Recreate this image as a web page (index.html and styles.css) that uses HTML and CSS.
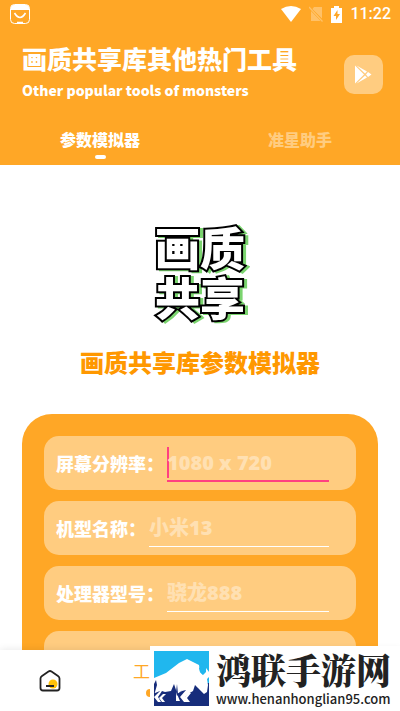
FILE: index.html
```html
<!DOCTYPE html>
<html lang="zh-CN">
<head>
    <meta charset="UTF-8">
    <meta name="viewport" content="width=device-width, initial-scale=1.0">
    <title>画质共享库</title>
    <link rel="stylesheet" href="styles.css">
</head>
<body>
    <header class="top">
        <div class="status-bar">
            <svg class="app-icon" width="20" height="20" viewBox="0 0 20 20">
                <rect x="0.5" y="0.5" width="19" height="19" rx="4" fill="none" stroke="#fff"/>
                <path d="M1 6V4a3 3 0 0 1 3-3h12a3 3 0 0 1 3 3v2z" fill="#fff"/>
                <path d="M4.500 9q5.500 9 11 0M7 18.500h6" fill="none" stroke="#fff" stroke-width="1.600"/>
            </svg>
            <div class="status-icons">
                <svg width="20" height="16" viewBox="0 0 20 16"><path d="M0 3Q10-3 20 3L10 16z" fill="#fff"/></svg>
                <svg class="no-sim" width="14" height="16" viewBox="0 0 14 16"><path d="M5 1h8v11.500L3.500 3zM2 5l9.500 10H2z" fill="#fff"/><path d="M0 1l13.500 14.500" stroke="#fff" stroke-width="1.200"/></svg>
                <svg width="11" height="17" viewBox="0 0 11 17"><path d="M0 2h3V0h5v2h3v15H0z" fill="#fff"/><path d="M6.500 4L2.500 10h2.500v4L9 8H6.500z" fill="#ffa726"/></svg>
                <time>11:22</time>
            </div>
        </div>
        <div class="heading">
            <div>
                <h1>画质共享库其他热门工具</h1>
                <p>Other popular tools of monsters</p>
            </div>
            <button class="play-button" type="button" aria-label="Play">
                <svg width="17" height="19" viewBox="0 0 17 19">
                    <path d="M0 0.500v18L9 9.500z" fill="#fff"/>
                    <path d="M1.500 0.500L12 6.500 10 8.500zM1.500 18.500L12 12.500 10 10.500zM13 7l3.500 2.500L13 12l-2-2.500z" fill="#fff"/>
                </svg>
            </button>
        </div>
        <nav class="tabs">
            <a class="active" href="#params">参数模拟器</a>
            <a href="#aim">准星助手</a>
        </nav>
    </header>

    <main id="params">
        <div class="logo">
            <span>画质</span>
            <span>共享</span>
        </div>
        <h2>画质共享库参数模拟器</h2>
        <form class="panel">
            <div class="field focused">
                <label for="resolution">屏幕分辨率：</label>
                <input id="resolution" type="text" placeholder="1080 x 720">
            </div>
            <div class="field">
                <label for="model">机型名称：</label>
                <input id="model" type="text" placeholder="小米13">
            </div>
            <div class="field">
                <label for="cpu">处理器型号：</label>
                <input id="cpu" type="text" placeholder="骁龙888">
            </div>
            <div class="field"></div>
        </form>
    </main>

    <footer>
        <nav class="bottom-nav">
            <a href="#home" aria-label="Home">
                <svg width="22" height="22" viewBox="0 0 22 22">
                    <circle cx="14" cy="14" r="4.500" fill="#ffc107"/>
                    <path d="M1.500 8.500Q1.500 7 3 6L9.500 1.500Q11 0.500 12.500 1.500L19 6Q20.500 7 20.500 8.500V18Q20.500 20.500 18 20.500H4Q1.500 20.500 1.500 18zM7 16h8" fill="none" stroke="#222" stroke-width="1.800"/>
                </svg>
            </a>
            <a class="current" href="#tools">工具</a>
        </nav>
        <div class="site-mark">
            <svg width="55" height="55" viewBox="0 0 55 55">
                <path d="M0 0h55v32H0z" fill="#20b7ee"/>
                <path d="M0 32h55v23H0z" fill="#172d7b"/>
                <path d="M0 27L12 22 25 12 33 8 45 14 46 21 49 24 52 21V17L55 21V26L53 28 54 34 53 41 50 43 44 37 41 34 39 40 34 43 31 46 34 51H30L26 46 32 39 28 40 23 43 26 50H22V39L20 33 17 40 11 41 8 40 4 46 7 51H4L0 46 6 40 1 42 0 38z" fill="#fff"/>
                <path d="M47 11L50 15 51 19 48 21 49 24 46 21 45 17 48 15z" fill="#20b7ee"/>
                <path d="M2 29L3 34 1 41H0V33zM23 33L24 43 28 39 23 45 22 41z" fill="#172d7b"/>
                <path d="M12 43l-4 4 3 4H8l-3-4 4-4zM37 42l-4 5 3 4h-3l-3-4 4-5z" fill="#fff"/>
            </svg>
            <div class="site-name">
                <strong>鸿联手游网</strong>
                <span>www.henanhonglian95.com</span>
            </div>
        </div>
    </footer>
</body>
</html>
```
FILE: styles.css
```css
* {
    box-sizing: border-box;
}

body, h1, h2, p {
    margin: 0;
}

body {
    display: flex;
    flex-direction: column;
    height: 100vh;
    overflow: hidden;
    background: #fff;
    font-family: "Noto Sans CJK SC", sans-serif;
}

a {
    text-decoration: none;
}

/* Orange header */
.top {
    flex: none;
    background: #ffa726;
    color: #fff;
}

.status-bar {
    display: flex;
    justify-content: space-between;
    align-items: center;
    height: 28px;
    padding: 0 9px 0 10px;
}

.status-icons {
    display: flex;
    align-items: center;
    gap: 8px;
}

.no-sim {
    opacity: 0.3;
}

time {
    font: 500 16px/20px Roboto, sans-serif;
}

.heading {
    display: flex;
    justify-content: space-between;
    align-items: center;
    padding: 12px 17px 0 22px;
}

h1 {
    font-size: 25px;
    line-height: 36px;
    font-weight: 900;
}

.heading p {
    padding-bottom: 4px;
    font-size: 14px;
    line-height: 28px;
    font-weight: 900;
}

.play-button {
    display: flex;
    justify-content: center;
    align-items: center;
    width: 39px;
    height: 39px;
    padding: 0;
    border: none;
    border-radius: 10px;
    background: #ffcc80;
}

.tabs {
    display: flex;
    margin-top: 19px;
    height: 38px;
}

.tabs a {
    flex: 1;
    color: #ffcc80;
    font-size: 16px;
    line-height: 24px;
    font-weight: 900;
    text-align: center;
}

.tabs .active {
    color: #fff;
}

.tabs .active::after {
    content: '';
    display: block;
    width: 11px;
    height: 4px;
    margin: 4px auto 0;
    border-radius: 2px;
    background: #fff;
}

/* Simulator form */
main {
    flex: 1;
    min-height: 0;
    padding: 57px 22px 0;
    overflow: hidden;
}

.logo {
    display: flex;
    flex-direction: column;
    align-items: center;
    color: #fff;
    font-size: 45px;
    line-height: 50px;
    font-weight: 900;
    -webkit-text-stroke: 4px #000;
    paint-order: stroke fill;
    filter: drop-shadow(3px 1px 0 #7bd46f);
}

h2 {
    margin-top: 22px;
    color: #ff9800;
    font-size: 24px;
    line-height: 36px;
    font-weight: 900;
    text-align: center;
}

.panel {
    display: flex;
    flex-direction: column;
    gap: 11px;
    margin-top: 34px;
    padding: 22px;
    border-radius: 30px;
    background: #ffa726;
}

.field {
    display: flex;
    align-items: center;
    height: 54px;
    padding: 0 27px 0 12px;
    border-radius: 15px;
    background: #ffcc80;
}

.field label {
    margin-right: 3px;
    color: #fff;
    font-size: 18px;
    font-weight: 900;
}

.field input {
    flex: 1;
    min-width: 0;
    height: 38px;
    padding: 0;
    border: none;
    border-bottom: 1px solid #fff;
    border-radius: 0;
    outline: none;
    background: none;
    color: #fff;
    font: 900 20px "Noto Sans", "Noto Sans CJK SC", sans-serif;
}

.field input::placeholder {
    color: #ffe0b2;
    opacity: 1;
}

.field.focused input {
    border-bottom: 2px solid #ff4081;
    background: linear-gradient(#ff4081, #ff4081) no-repeat left 3px / 2px 31px;
}

/* Bottom navigation */
footer {
    position: relative;
    flex: none;
    box-shadow: 0 0 8px rgba(0, 0, 0, 0.1);
    background: #fff;
}

.bottom-nav {
    display: grid;
    grid-template-columns: repeat(4, 1fr);
    height: 61px;
}

.bottom-nav a {
    display: flex;
    flex-direction: column;
    justify-content: center;
    align-items: center;
    color: #ffa726;
    font-size: 17px;
    line-height: 24px;
}

.bottom-nav .current {
    padding-bottom: 6px;
}

.current::after {
    content: '';
    width: 8px;
    height: 8px;
    margin-top: 6px;
    border-radius: 50%;
    background: #ffa726;
}

.site-mark {
    position: absolute;
    right: 0;
    bottom: 0;
    display: flex;
    align-items: center;
    gap: 7px;
    width: 250px;
    height: 65px;
    padding-left: 4px;
    background: #fff;
}

.site-mark svg {
    flex: none;
}

.site-name {
    display: flex;
    flex-direction: column;
    color: #222;
}

.site-name strong {
    font: 900 35px/40px "Noto Serif CJK SC", "Noto Sans CJK SC", serif;
}

.site-name span {
    font-size: 13px;
    line-height: 20px;
    font-weight: 500;
}
```
